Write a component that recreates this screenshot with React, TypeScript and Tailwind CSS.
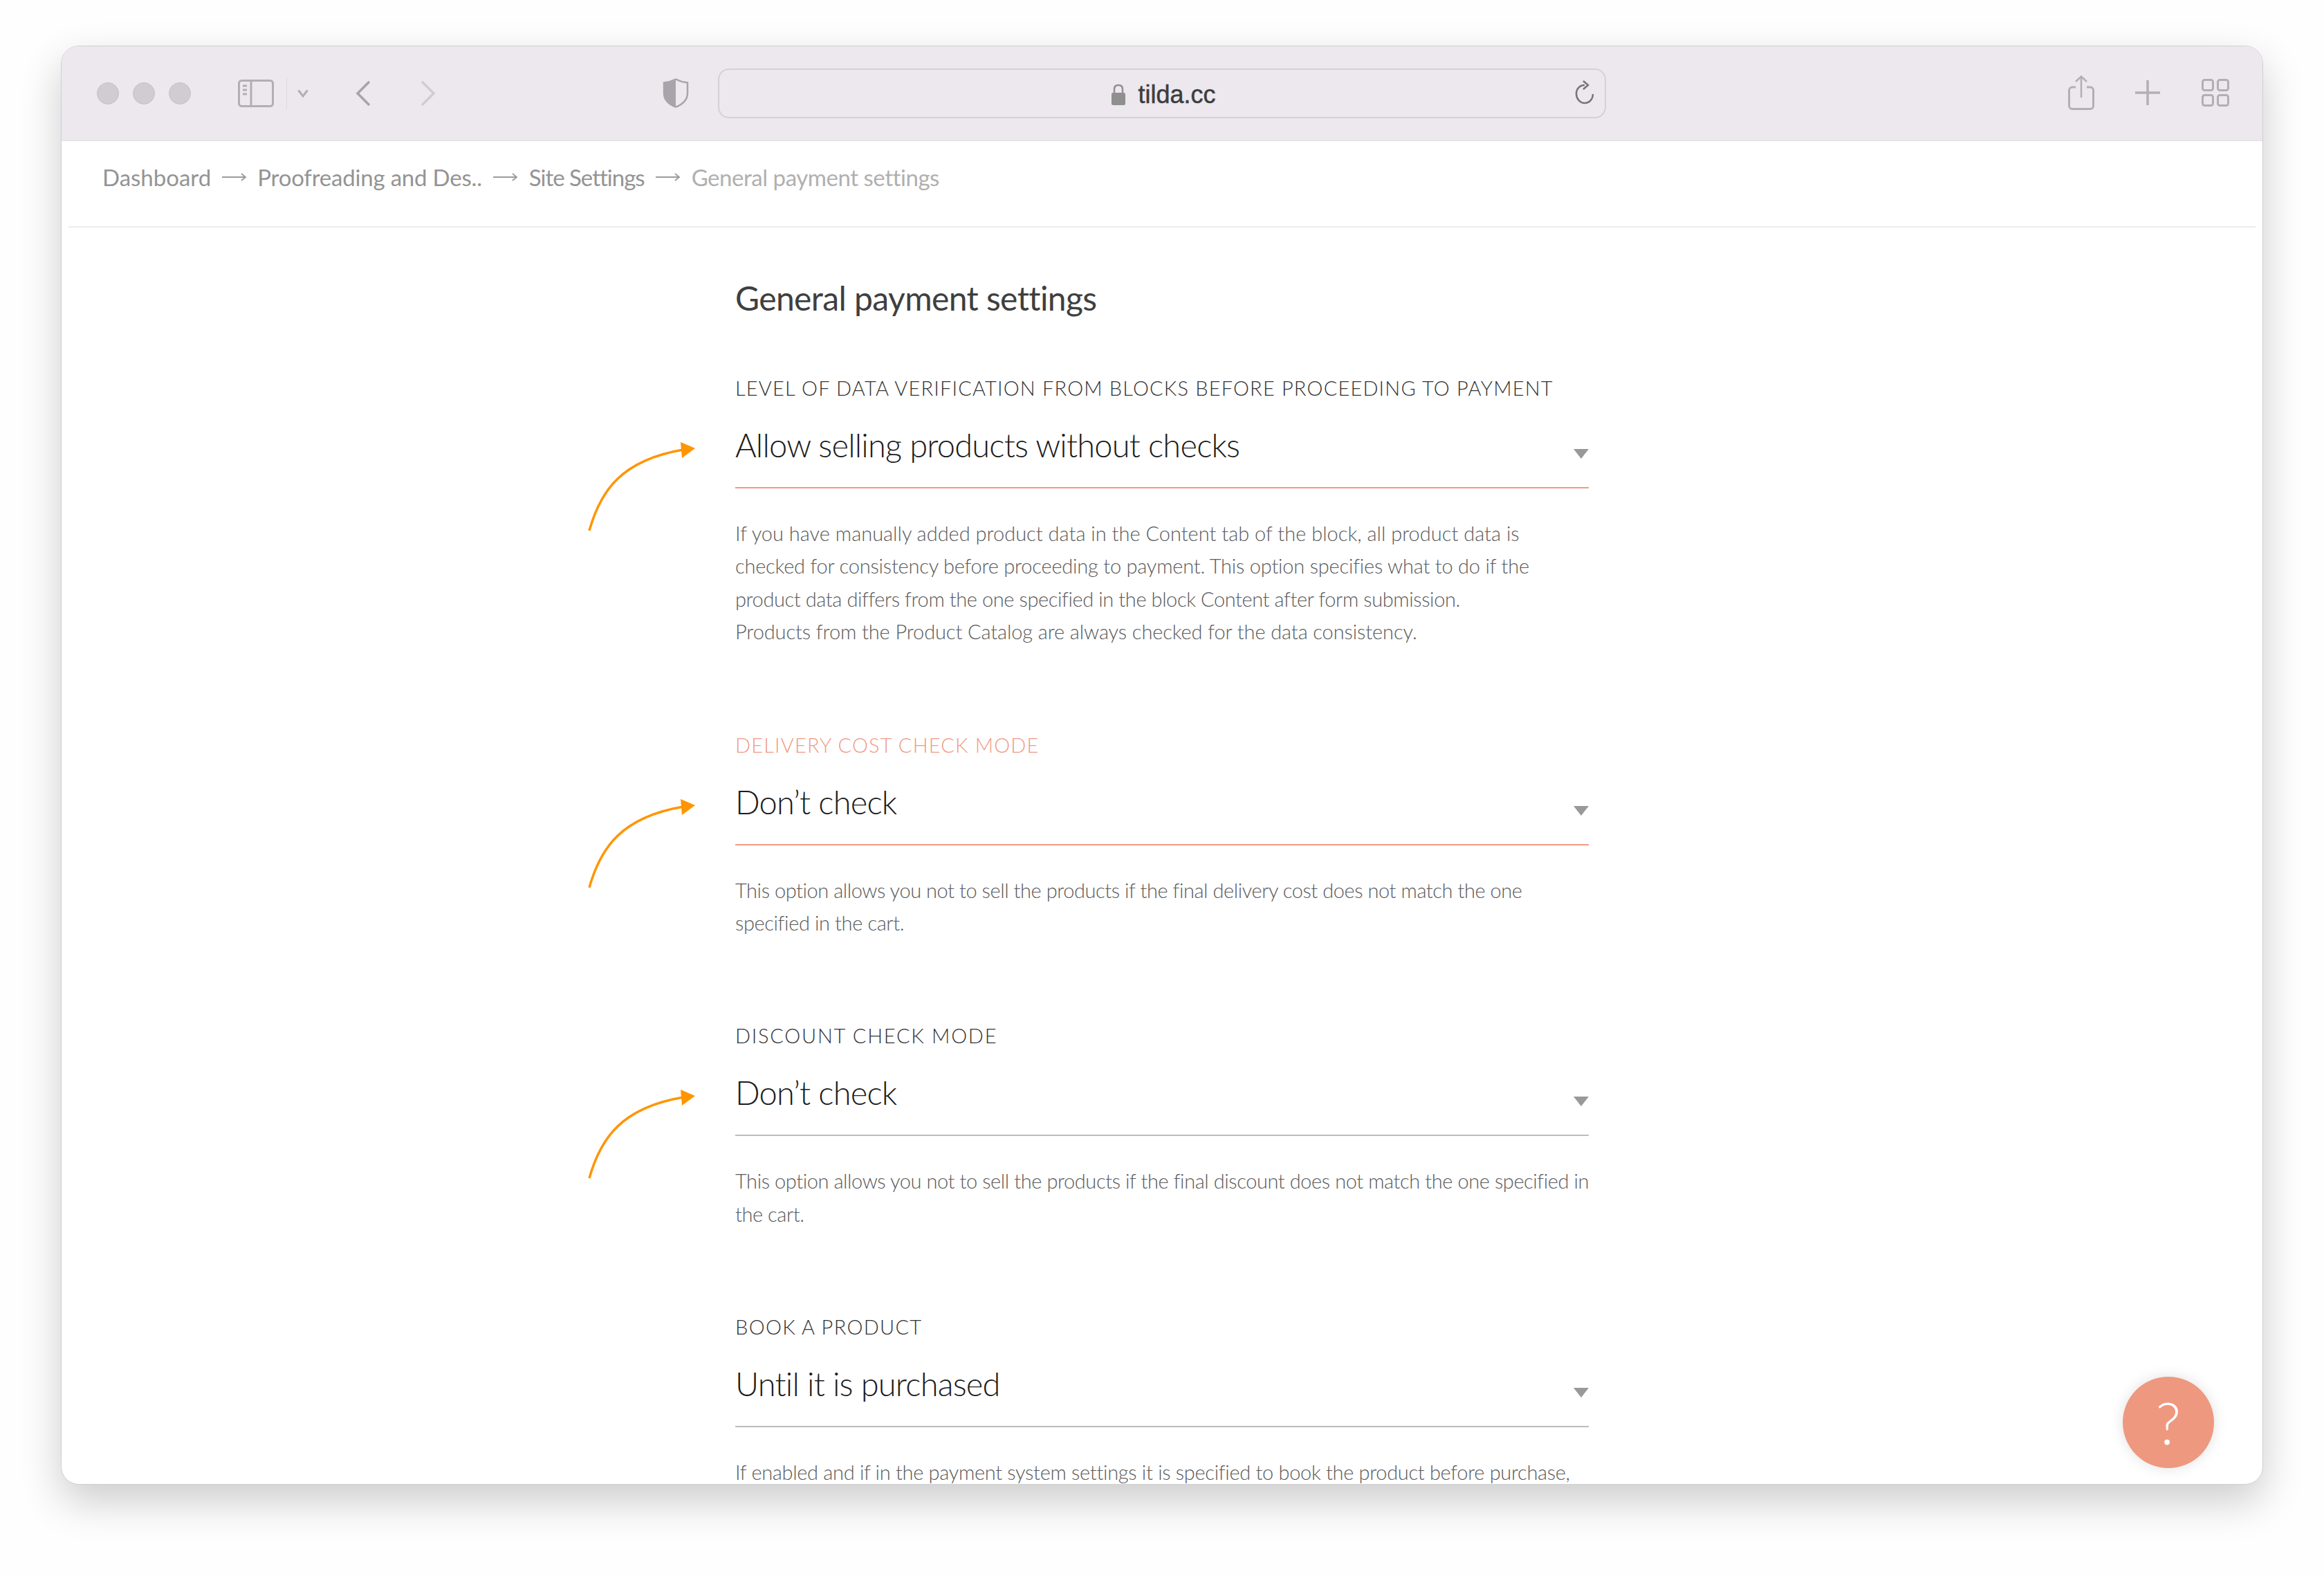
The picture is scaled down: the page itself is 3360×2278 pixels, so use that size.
import React from "react";

const Arrow = () => (
  <svg className="absolute left-[-215px] top-[94px]" width="160" height="140" viewBox="0 0 160 140" fill="none">
    <path d="M4 132C20 75 50 30 140 15" stroke="#ff9500" strokeWidth="3.5" />
    <path d="M136 4L157 13L138 27Z" fill="#ff9500" />
  </svg>
);

type Line = { text: string; className: string };

type SectionProps = {
  label: string;
  labelClass: string;
  value: string;
  lines: Line[];
  activeLabel?: boolean;
  activeLine?: boolean;
  arrow?: boolean;
};

function Section({ label, labelClass, value, lines, activeLabel, activeLine, arrow }: SectionProps) {
  return (
    <section className="relative">
      {arrow && <Arrow />}
      <div className={`h-[40px] text-[29px] leading-[40px] font-light whitespace-nowrap ${labelClass} ${activeLabel ? "text-[#f09a84]" : "text-[#333333]"}`}>
        {label}
      </div>
      <div className={`flex h-[125px] items-start justify-between border-b-2 pt-[32px] ${activeLine ? "border-[#f09a84]" : "border-[#bdbdbd]"}`}>
        <span className="text-[47px] leading-[60px] font-light tracking-[-0.8px] text-[#1c1c1c] whitespace-nowrap">{value}</span>
        <svg className="mt-[36px]" width="22" height="14" viewBox="0 0 22 14">
          <path d="M0 0H22L11 14Z" fill="#999999" />
        </svg>
      </div>
      <div className="mt-[41px] text-[29px] leading-[47.4px] font-light text-[#5a5a5a] whitespace-nowrap">
        {lines.map((l) => (
          <div key={l.text} className={l.className}>
            {l.text}
          </div>
        ))}
      </div>
    </section>
  );
}

const iconStroke = "#b3aeb5";

function Toolbar() {
  return (
    <header className="flex h-[137px] shrink-0 items-center border-b-2 border-[#e6e4e7] bg-[#ece8ee]">
      <div className="ml-[51px] flex gap-[20px]">
        <span className="h-[32px] w-[32px] rounded-full border border-[#c5c1c6] bg-[#d0ccd1]" />
        <span className="h-[32px] w-[32px] rounded-full border border-[#c5c1c6] bg-[#d0ccd1]" />
        <span className="h-[32px] w-[32px] rounded-full border border-[#c5c1c6] bg-[#d0ccd1]" />
      </div>
      <svg className="ml-[68px]" width="52" height="40" viewBox="0 0 52 40" fill="none">
        <rect x="1.5" y="1.5" width="49" height="37" rx="4" stroke={iconStroke} strokeWidth="3" />
        <path d="M19 2V38" stroke={iconStroke} strokeWidth="3" />
        <path d="M7 9H13M7 15H13M7 21H13" stroke={iconStroke} strokeWidth="3" />
      </svg>
      <span className="ml-[18px] h-[46px] w-px bg-[#ddd9de]" />
      <svg className="ml-[15px]" width="16" height="12" viewBox="0 0 16 12" fill="none">
        <path d="M1.5 1.5L8 10L14.5 1.5" stroke={iconStroke} strokeWidth="3" />
      </svg>
      <svg className="ml-[67px]" width="24" height="38" viewBox="0 0 24 38" fill="none">
        <path d="M21 2L4 19L21 36" stroke="#a8a3aa" strokeWidth="3.5" />
      </svg>
      <svg className="ml-[70px]" width="24" height="38" viewBox="0 0 24 38" fill="none">
        <path d="M3 2L20 19L3 36" stroke="#d0ccd1" strokeWidth="3.5" />
      </svg>
      <svg className="ml-[327px]" width="38" height="43" viewBox="0 0 38 43" fill="none">
        <path d="M19 1.5C25 4.5 30 6 36 6.5V22C36 31 29 38 19 41.5C9 38 2 31 2 22V6.5C8 6 13 4.5 19 1.5Z" stroke="#a9a4ab" strokeWidth="2.5" />
        <path d="M19 1.5C13 4.5 8 6 2 6.5V22C2 31 9 38 19 41.5Z" fill="#a9a4ab" />
      </svg>
      <div className="relative ml-[42px] flex h-[72px] w-[1284px] items-center justify-center rounded-[16px] border-2 border-[#d5d0d6] pt-[4px] pl-[4px]">
        <svg className="mr-[17px]" width="22" height="32" viewBox="0 0 22 32" fill="none">
          <path d="M5 14V8C5 4 7.5 2 11 2C14.5 2 17 4 17 8V14" stroke="#8f8f8f" strokeWidth="2.5" />
          <rect x="1" y="13" width="20" height="18" rx="2.5" fill="#8f8f8f" />
        </svg>
        <span className="font-['Liberation_Sans',sans-serif] text-[36px] leading-[40px] font-normal text-[#3d3d3d] [-webkit-text-stroke:0.5px_#3d3d3d]">tilda.cc</span>
        <svg className="absolute right-[14px] top-[15px]" width="30" height="36" viewBox="0 0 30 36" fill="none">
          <path d="M15 7C8 7 3 12.5 3 19.5C3 26.5 8 33 15 33C22 33 27 27 27 20" stroke="#77737a" strokeWidth="2.5" />
          <path d="M13 1L20 7L13 13" stroke="#77737a" strokeWidth="2.5" />
        </svg>
      </div>
      <svg className="ml-[668px] -mt-[2px]" width="38" height="50" viewBox="0 0 38 50" fill="none">
        <path d="M11 17H6C3.5 17 1.5 19 1.5 21.5V44C1.5 46.5 3.5 48.5 6 48.5H32C34.5 48.5 36.5 46.5 36.5 44V21.5C36.5 19 34.5 17 32 17H27" stroke={iconStroke} strokeWidth="3" />
        <path d="M19 32V2M11 9L19 1.5L27 9" stroke={iconStroke} strokeWidth="2.5" />
      </svg>
      <svg className="ml-[58px] -mt-[2px]" width="38" height="38" viewBox="0 0 38 38" fill="none">
        <path d="M19 1V37M1 19H37" stroke={iconStroke} strokeWidth="3.5" />
      </svg>
      <svg className="ml-[59px] -mt-[2px]" width="40" height="40" viewBox="0 0 40 40" fill="none">
        <rect x="1.5" y="1.5" width="15" height="15" rx="3" stroke={iconStroke} strokeWidth="3" />
        <rect x="23.5" y="1.5" width="15" height="15" rx="3" stroke={iconStroke} strokeWidth="3" />
        <rect x="1.5" y="23.5" width="15" height="15" rx="3" stroke={iconStroke} strokeWidth="3" />
        <rect x="23.5" y="23.5" width="15" height="15" rx="3" stroke={iconStroke} strokeWidth="3" />
      </svg>
    </header>
  );
}

const BreadArrow = () => (
  <svg width="36" height="14" viewBox="0 0 36 14" fill="none">
    <path d="M0 7H34M28 2L34 7L28 12" stroke="#9b9b9b" strokeWidth="1.8" />
  </svg>
);

function Breadcrumbs() {
  return (
    <nav className="mx-[10px] flex h-[125px] shrink-0 items-center gap-[16px] border-b-2 border-[#ececec] pb-[20px] pl-[49px] text-[33px] leading-[44px] text-[#949494] whitespace-nowrap">
      <span>Dashboard</span>
      <BreadArrow />
      <span className="-ml-[1px] tracking-[-0.2px]">Proofreading and Des..</span>
      <BreadArrow />
      <span className="tracking-[-1px]">Site Settings</span>
      <BreadArrow />
      <span className="tracking-[-0.45px] text-[#b0b0b0]">General payment settings</span>
    </nav>
  );
}

export default function App() {
  return (
    <div className="h-[2278px] w-[3360px] overflow-hidden bg-[#fefefe] pl-[88px] pt-[66px] font-['Lato',sans-serif]">
      <div className="relative flex h-[2080px] w-[3184px] flex-col overflow-hidden rounded-[26px] border border-[#d0d0d0] bg-white shadow-[0_24px_60px_0_rgba(0,0,0,0.2)]">
        <Toolbar />
        <Breadcrumbs />
        <main className="ml-[974px] w-[1234px] pt-[72px]">
          <h1 className="mb-[80px] text-[48px] leading-[60px] font-normal tracking-[-0.6px] text-[#3f3f3f] whitespace-nowrap">General payment settings</h1>
          <div className="flex flex-col gap-[120px]">
            <Section
              arrow
              activeLine
              label="LEVEL OF DATA VERIFICATION FROM BLOCKS BEFORE PROCEEDING TO PAYMENT"
              labelClass="tracking-[1.17px]"
              value="Allow selling products without checks"
              lines={[
                { text: "If you have manually added product data in the Content tab of the block, all product data is", className: "tracking-[0px]" },
                { text: "checked for consistency before proceeding to payment. This option specifies what to do if the", className: "tracking-[-0.22px]" },
                { text: "product data differs from the one specified in the block Content after form submission.", className: "tracking-[-0.41px]" },
                { text: "Products from the Product Catalog are always checked for the data consistency.", className: "tracking-[-0.11px]" },
              ]}
            />
            <Section
              arrow
              activeLabel
              activeLine
              label="DELIVERY COST CHECK MODE"
              labelClass="tracking-[1.17px]"
              value="Don’t check"
              lines={[
                { text: "This option allows you not to sell the products if the final delivery cost does not match the one", className: "tracking-[-0.44px]" },
                { text: "specified in the cart.", className: "tracking-[-0.39px]" },
              ]}
            />
            <Section
              arrow
              label="DISCOUNT CHECK MODE"
              labelClass="tracking-[1.75px]"
              value="Don’t check"
              lines={[
                { text: "This option allows you not to sell the products if the final discount does not match the one specified in", className: "tracking-[-0.42px]" },
                { text: "the cart.", className: "tracking-[-0.45px]" },
              ]}
            />
            <Section
              label="BOOK A PRODUCT"
              labelClass="tracking-[1.3px]"
              value="Until it is purchased"
              lines={[
                { text: "If enabled and if in the payment system settings it is specified to book the product before purchase,", className: "tracking-[-0.32px]" },
              ]}
            />
          </div>
        </main>
        <button className="absolute bottom-[23px] right-[70px] flex h-[132px] w-[132px] items-center justify-center rounded-full bg-[#ee9880] text-[84px] leading-none font-light text-white shadow-[0_0_20px_rgba(0,0,0,0.12)]">
          ?
        </button>
      </div>
    </div>
  );
}
